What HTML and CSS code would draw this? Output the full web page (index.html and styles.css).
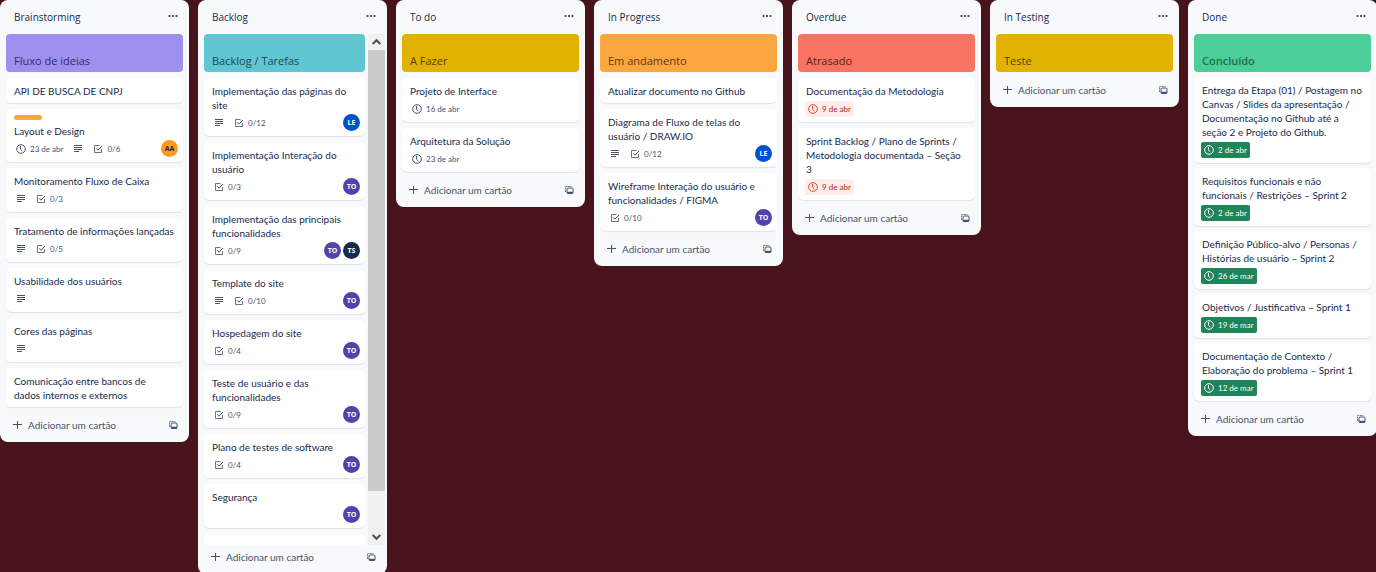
FILE: index.html
```html
<!DOCTYPE html>
<html lang="pt-BR">
<head>
<meta charset="utf-8">
<meta name="viewport" content="width=device-width, initial-scale=1">
<title>Quadro do projeto</title>
<link rel="stylesheet" href="styles.css">
</head>
<body>
<svg class="sprite" aria-hidden="true">
  <symbol id="clock" viewBox="0 0 10 10"><circle cx="5" cy="5" r="4.3" fill="none" stroke="currentColor"/><path d="M4.5 2V5.2L6.4 7" fill="none" stroke="currentColor"/></symbol>
  <symbol id="desc" viewBox="0 0 10 10"><path d="M1 1.500h8M1 3.500h8M1 5.500h8M1 7.500h5" fill="none" stroke="currentColor"/></symbol>
  <symbol id="check" viewBox="0 0 10 10"><path d="M6.500 1.500H1.500V8.500H8.500V5" fill="none" stroke="currentColor" stroke-opacity=".8"/><path d="M3.200 4.300L5 6.200L9 2" fill="none" stroke="currentColor"/></symbol>
  <symbol id="dots" viewBox="0 0 10 10"><path d="M.5 3h2v2h-2zM4 3h2v2h-2zM7.500 3h2v2h-2z" fill="currentColor"/></symbol>
  <symbol id="plus" viewBox="0 0 10 10"><path d="M5.500 1v8M1 4.500h9" fill="none" stroke="currentColor"/></symbol>
  <symbol id="template" viewBox="0 0 10 10"><path d="M1.500 7V1.500H7.500" fill="none" stroke="currentColor" stroke-opacity=".75" stroke-dasharray="2 .6"/><rect x="3" y="3" width="6" height="5.500" rx="1" fill="none" stroke="currentColor"/><path d="M3 6.800h6v1.700H3z" fill="currentColor"/></symbol>
  <symbol id="up" viewBox="0 0 10 10"><path d="M1.200 7L5 3.200L8.800 7" fill="none" stroke="currentColor" stroke-width="2"/></symbol>
  <symbol id="down" viewBox="0 0 10 10"><path d="M1.200 3L5 6.800L8.800 3" fill="none" stroke="currentColor" stroke-width="2"/></symbol>
</svg>
<main class="board">

  <section class="list">
    <header class="list-header"><h2>Brainstorming</h2><button class="icon-button" aria-label="Ações da lista"><svg><use href="#dots"/></svg></button></header>
    <div class="cards">
      <article class="cover purple">Fluxo de ideias</article>
      <article class="card"><h3>API DE BUSCA DE CNPJ</h3></article>
      <article class="card"><span class="label"></span><h3>Layout e Design</h3>
        <div class="badges"><span class="badge"><svg><use href="#clock"/></svg>23 de abr</span><span class="badge"><svg><use href="#desc"/></svg></span><span class="badge"><svg><use href="#check"/></svg>0/6</span><span class="members"><span class="avatar aa">AA</span></span></div></article>
      <article class="card"><h3>Monitoramento Fluxo de Caixa</h3>
        <div class="badges"><span class="badge"><svg><use href="#desc"/></svg></span><span class="badge"><svg><use href="#check"/></svg>0/3</span></div></article>
      <article class="card"><h3>Tratamento de informações lançadas</h3>
        <div class="badges"><span class="badge"><svg><use href="#desc"/></svg></span><span class="badge"><svg><use href="#check"/></svg>0/5</span></div></article>
      <article class="card"><h3>Usabilidade dos usuários</h3>
        <div class="badges"><span class="badge"><svg><use href="#desc"/></svg></span></div></article>
      <article class="card"><h3>Cores das páginas</h3>
        <div class="badges"><span class="badge"><svg><use href="#desc"/></svg></span></div></article>
      <article class="card"><h3>Comunicação entre bancos de<br>dados internos e externos</h3></article>
    </div>
    <footer class="list-footer"><button class="add"><svg><use href="#plus"/></svg>Adicionar um cartão</button><button class="icon-button" aria-label="Criar a partir de modelo"><svg><use href="#template"/></svg></button></footer>
  </section>

  <section class="list">
    <header class="list-header"><h2>Backlog</h2><button class="icon-button" aria-label="Ações da lista"><svg><use href="#dots"/></svg></button></header>
    <div class="scroll-area">
      <div class="cards">
        <article class="cover teal">Backlog / Tarefas</article>
        <article class="card"><h3>Implementação das páginas do site</h3>
          <div class="badges"><span class="badge"><svg><use href="#desc"/></svg></span><span class="badge"><svg><use href="#check"/></svg>0/12</span><span class="members"><span class="avatar le">LE</span></span></div></article>
        <article class="card"><h3>Implementação Interação do usuário</h3>
          <div class="badges"><span class="badge"><svg><use href="#check"/></svg>0/3</span><span class="members"><span class="avatar to">TO</span></span></div></article>
        <article class="card"><h3>Implementação das principais funcionalidades</h3>
          <div class="badges"><span class="badge"><svg><use href="#check"/></svg>0/9</span><span class="members"><span class="avatar to">TO</span><span class="avatar ts">TS</span></span></div></article>
        <article class="card"><h3>Template do site</h3>
          <div class="badges"><span class="badge"><svg><use href="#desc"/></svg></span><span class="badge"><svg><use href="#check"/></svg>0/10</span><span class="members"><span class="avatar to">TO</span></span></div></article>
        <article class="card"><h3>Hospedagem do site</h3>
          <div class="badges"><span class="badge"><svg><use href="#check"/></svg>0/4</span><span class="members"><span class="avatar to">TO</span></span></div></article>
        <article class="card"><h3>Teste de usuário e das funcionalidades</h3>
          <div class="badges"><span class="badge"><svg><use href="#check"/></svg>0/9</span><span class="members"><span class="avatar to">TO</span></span></div></article>
        <article class="card"><h3>Plano de testes de software</h3>
          <div class="badges"><span class="badge"><svg><use href="#check"/></svg>0/4</span><span class="members"><span class="avatar to">TO</span></span></div></article>
        <article class="card"><h3>Segurança</h3>
          <div class="badges"><span class="members"><span class="avatar to">TO</span></span></div></article>
        <article class="card empty"></article>
      </div>
      <div class="scrollbar" aria-hidden="true"><svg><use href="#up"/></svg><div class="track"><div class="thumb"></div></div><svg><use href="#down"/></svg></div>
    </div>
    <footer class="list-footer"><button class="add"><svg><use href="#plus"/></svg>Adicionar um cartão</button><button class="icon-button" aria-label="Criar a partir de modelo"><svg><use href="#template"/></svg></button></footer>
  </section>

  <section class="list">
    <header class="list-header"><h2>To do</h2><button class="icon-button" aria-label="Ações da lista"><svg><use href="#dots"/></svg></button></header>
    <div class="cards">
      <article class="cover yellow">A Fazer</article>
      <article class="card"><h3>Projeto de Interface</h3>
        <div class="badges"><span class="badge"><svg><use href="#clock"/></svg>16 de abr</span></div></article>
      <article class="card"><h3>Arquitetura da Solução</h3>
        <div class="badges"><span class="badge"><svg><use href="#clock"/></svg>23 de abr</span></div></article>
    </div>
    <footer class="list-footer"><button class="add"><svg><use href="#plus"/></svg>Adicionar um cartão</button><button class="icon-button" aria-label="Criar a partir de modelo"><svg><use href="#template"/></svg></button></footer>
  </section>

  <section class="list">
    <header class="list-header"><h2>In Progress</h2><button class="icon-button" aria-label="Ações da lista"><svg><use href="#dots"/></svg></button></header>
    <div class="cards">
      <article class="cover orange">Em andamento</article>
      <article class="card"><h3>Atualizar documento no Github</h3></article>
      <article class="card"><h3>Diagrama de Fluxo de telas do usuário / DRAW.IO</h3>
        <div class="badges"><span class="badge"><svg><use href="#desc"/></svg></span><span class="badge"><svg><use href="#check"/></svg>0/12</span><span class="members"><span class="avatar le">LE</span></span></div></article>
      <article class="card"><h3>Wireframe Interação do usuário e funcionalidades / FIGMA</h3>
        <div class="badges"><span class="badge"><svg><use href="#check"/></svg>0/10</span><span class="members"><span class="avatar to">TO</span></span></div></article>
    </div>
    <footer class="list-footer"><button class="add"><svg><use href="#plus"/></svg>Adicionar um cartão</button><button class="icon-button" aria-label="Criar a partir de modelo"><svg><use href="#template"/></svg></button></footer>
  </section>

  <section class="list">
    <header class="list-header"><h2>Overdue</h2><button class="icon-button" aria-label="Ações da lista"><svg><use href="#dots"/></svg></button></header>
    <div class="cards">
      <article class="cover red">Atrasado</article>
      <article class="card"><h3>Documentação da Metodologia</h3>
        <div class="badges"><span class="badge late"><svg><use href="#clock"/></svg>9 de abr</span></div></article>
      <article class="card"><h3>Sprint Backlog / Plano de Sprints / Metodologia documentada – Seção<br>3</h3>
        <div class="badges"><span class="badge late"><svg><use href="#clock"/></svg>9 de abr</span></div></article>
    </div>
    <footer class="list-footer"><button class="add"><svg><use href="#plus"/></svg>Adicionar um cartão</button><button class="icon-button" aria-label="Criar a partir de modelo"><svg><use href="#template"/></svg></button></footer>
  </section>

  <section class="list">
    <header class="list-header"><h2>In Testing</h2><button class="icon-button" aria-label="Ações da lista"><svg><use href="#dots"/></svg></button></header>
    <div class="cards">
      <article class="cover yellow">Teste</article>
    </div>
    <footer class="list-footer"><button class="add"><svg><use href="#plus"/></svg>Adicionar um cartão</button><button class="icon-button" aria-label="Criar a partir de modelo"><svg><use href="#template"/></svg></button></footer>
  </section>

  <section class="list compact">
    <header class="list-header"><h2>Done</h2><button class="icon-button" aria-label="Ações da lista"><svg><use href="#dots"/></svg></button></header>
    <div class="cards">
      <article class="cover green">Concluído</article>
      <article class="card"><h3>Entrega da Etapa (01) / Postagem no Canvas / Slides da apresentação / Documentação no Github até a seção 2 e Projeto do Github.</h3>
        <div class="badges"><span class="badge complete"><svg><use href="#clock"/></svg>2 de abr</span></div></article>
      <article class="card"><h3>Requisitos funcionais e não funcionais / Restrições – Sprint 2</h3>
        <div class="badges"><span class="badge complete"><svg><use href="#clock"/></svg>2 de abr</span></div></article>
      <article class="card"><h3>Definição Público-alvo / Personas / Histórias de usuário – Sprint 2</h3>
        <div class="badges"><span class="badge complete"><svg><use href="#clock"/></svg>26 de mar</span></div></article>
      <article class="card"><h3>Objetivos / Justificativa – Sprint 1</h3>
        <div class="badges"><span class="badge complete"><svg><use href="#clock"/></svg>19 de mar</span></div></article>
      <article class="card"><h3>Documentação de Contexto / Elaboração do problema – Sprint 1</h3>
        <div class="badges"><span class="badge complete"><svg><use href="#clock"/></svg>12 de mar</span></div></article>
    </div>
    <footer class="list-footer"><button class="add"><svg><use href="#plus"/></svg>Adicionar um cartão</button><button class="icon-button" aria-label="Criar a partir de modelo"><svg><use href="#template"/></svg></button></footer>
  </section>

</main>
</body>
</html>
```
FILE: styles.css
```css
* { box-sizing: border-box; }

body {
  margin: 0;
  height: 100vh;
  overflow: hidden;
  background: #47141d;
  color: #172b4d;
  font-family: "Segoe UI", Lato, "Noto Sans", sans-serif;
  font-size: 10px;
  line-height: 14px;
}

h2, h3 { margin: 0; font-size: 10px; }
h2 { font-family: "Segoe UI", "Open Sans", "Noto Sans", sans-serif; font-weight: 500; }
h3 { font-weight: 400; }

svg { display: block; flex: none; width: 10px; height: 10px; }
.sprite { display: none; }

button {
  padding: 0;
  border: 0;
  background: none;
  color: #44546f;
  font: inherit;
  cursor: pointer;
}

.board {
  display: grid;
  grid-template-columns: repeat(7, minmax(189px, 1fr));
  gap: 9px;
  align-items: start;
}

.list {
  display: flex;
  flex-direction: column;
  max-height: calc(100vh + 2px);
  border-radius: 8px;
  background: #f7f9fb;
}

.list-header {
  display: flex;
  flex: none;
  justify-content: space-between;
  align-items: center;
  height: 34px;
  padding: 0 11px 0 14px;
}

.cards {
  display: flex;
  flex-direction: column;
  gap: 6px;
  padding: 0 6px 6px;
}

.compact .cards { gap: 5px; }

.cover {
  display: flex;
  flex: none;
  align-items: flex-end;
  height: 38px;
  padding: 0 8px 4px;
  border-radius: 4px;
  font-family: "Segoe UI", "Open Sans", "Noto Sans", sans-serif;
  font-size: 11px;
}

.purple { background: #9f8fef; color: #352c63; }
.teal { background: #60c6d2; color: #1d474c; }
.yellow { background: #e2b203; color: #533f04; }
.orange { background: #fba63e; color: #5f3811; }
.red { background: #f87462; color: #601e16; }
.green { background: #4bce97; color: #216e4e; font-weight: 600; }

.card {
  flex: none;
  padding: 6px 5px 5px 8px;
  border-radius: 5px;
  background: #fff;
  box-shadow: 0 1px 1px #091e4218;
}

.empty { height: 44px; }

.label {
  display: block;
  width: 28px;
  height: 5px;
  margin-bottom: 4px;
  border-radius: 3px;
  background: #fba63e;
}

.badges {
  display: flex;
  align-items: center;
  gap: 4px;
  height: 17px;
  margin: 2px 0 0 -1px;
}

.badge {
  display: flex;
  align-items: center;
  gap: 4px;
  height: 16px;
  padding: 0 3px;
  border-radius: 2px;
  color: #44546f;
  font-size: 8px;
}

.late { background: #ffeceb; color: #ae2a19; }
.late svg { color: #e34935; }
.complete { background: #1f845a; color: #fff; }

.members { display: flex; gap: 2px; margin-left: auto; }

.avatar {
  width: 17px;
  height: 17px;
  border-radius: 50%;
  color: #fff;
  font-family: "Segoe UI", "Open Sans", "Noto Sans", sans-serif;
  font-size: 7px;
  font-weight: 700;
  line-height: 17px;
  text-align: center;
}

.aa { background: #ff991f; color: #172b4d; }
.le { background: #0052cc; }
.to { background: #5243aa; }
.ts { background: #172b4d; }

.scroll-area {
  display: flex;
  min-height: 0;
  gap: 3px;
  padding-right: 2px;
}

.scroll-area .cards {
  flex: 1;
  min-width: 0;
  padding-right: 0;
  overflow: hidden;
}

.scrollbar {
  display: flex;
  flex: none;
  flex-direction: column;
  width: 17px;
  background: #f1f1f1;
  color: #505050;
}

.scrollbar svg { margin: 3px; width: 11px; }
.track { flex: 1; }
.thumb { height: 92%; background: #cbcbcb; }

.list-footer {
  display: flex;
  flex: none;
  justify-content: space-between;
  align-items: center;
  height: 29px;
  padding: 0 11px 5px 12px;
}

.add {
  display: flex;
  align-items: center;
  gap: 6px;
}
```
